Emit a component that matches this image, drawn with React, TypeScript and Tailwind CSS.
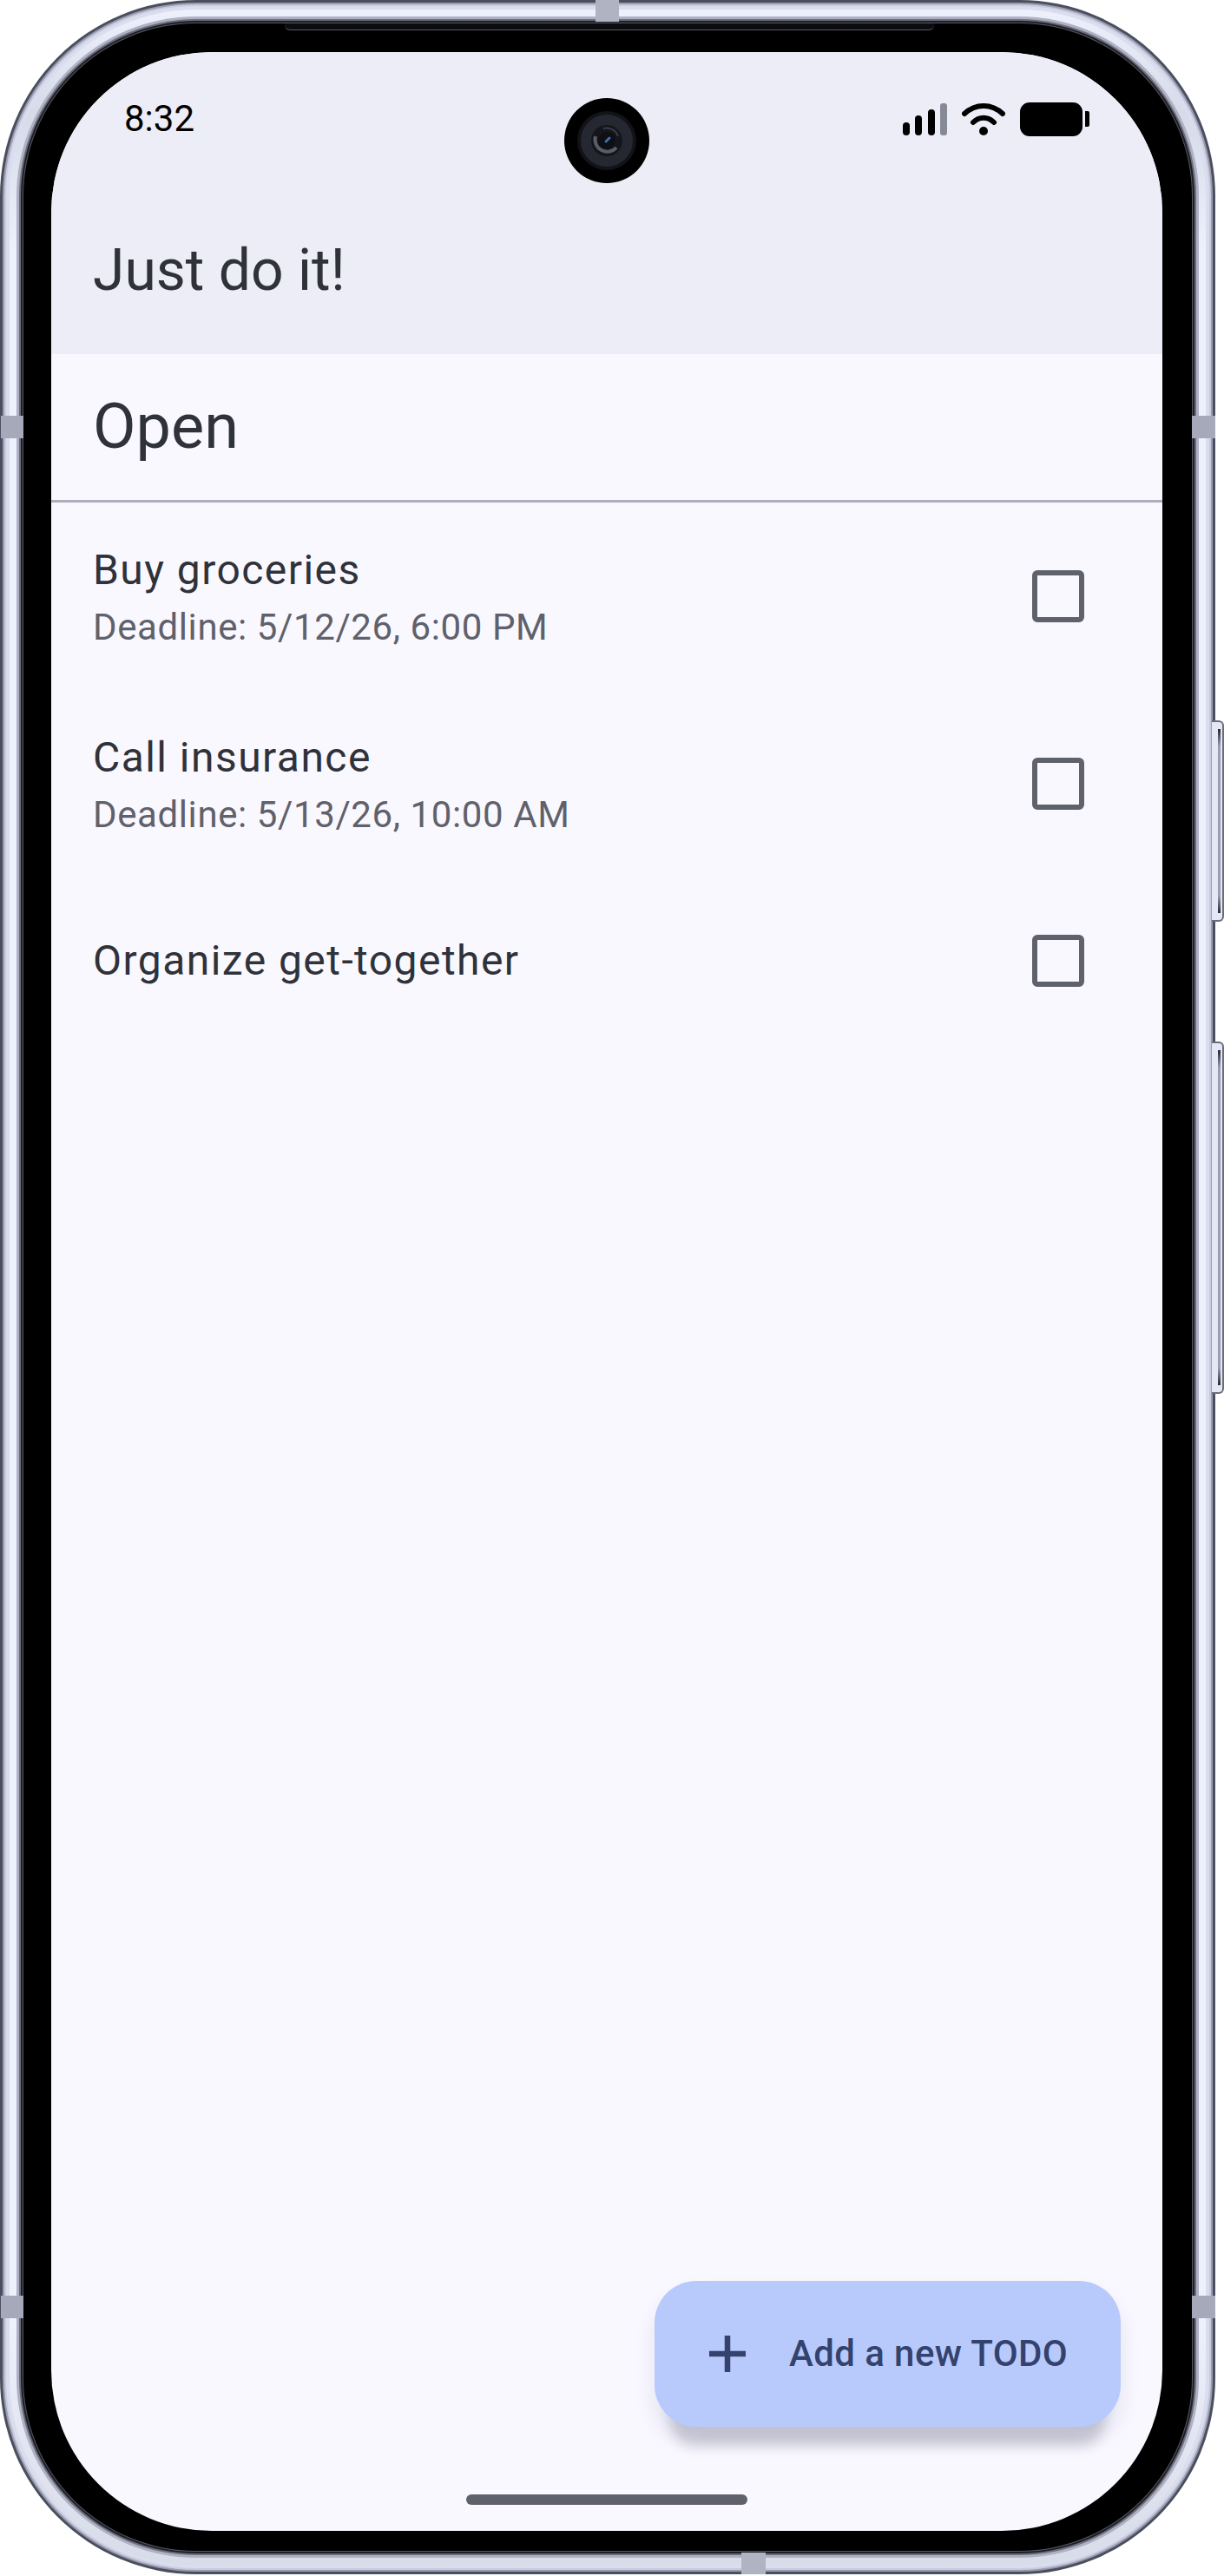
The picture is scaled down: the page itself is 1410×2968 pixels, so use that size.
const roboto = "font-['Roboto',sans-serif]";

const todos = [
  { title: 'Buy groceries', deadline: 'Deadline: 5/12/26, 6:00 PM' },
  { title: 'Call insurance', deadline: 'Deadline: 5/13/26, 10:00 AM' },
  { title: 'Organize get-together' },
];

function StatusIcons() {
  return (
    <div className="flex items-center justify-end h-[48px]">
      <svg width="52" height="38" viewBox="0 0 52 38" className="mr-[17px]">
        <rect x="1" y="23" width="8" height="15" rx="4" fill="#000" />
        <rect x="15" y="15" width="8" height="23" rx="4" fill="#000" />
        <rect x="30" y="8" width="8" height="30" rx="4" fill="#000" />
        <rect x="44" y="1" width="8" height="37" rx="3" fill="#868a96" />
      </svg>
      <svg width="50" height="38" viewBox="0 0 50 38" fill="none" className="mr-[17px]">
        <path d="M3 13C16 1 34 1 47 13" stroke="#000" strokeWidth="6" strokeLinecap="round" />
        <path d="M13 23C20 16 30 16 37 23" stroke="#000" strokeWidth="6" strokeLinecap="round" />
        <circle cx="25" cy="33" r="5" fill="#000" />
      </svg>
      <div className="w-[72px] h-[39px] rounded-[11px] bg-black" />
      <div className="ml-[3px] w-[5px] h-[18px] rounded-r-[2px] bg-black" />
    </div>
  );
}

function Camera() {
  return (
    <svg width="98" height="98" viewBox="0 0 98 98">
      <circle cx="49" cy="49" r="49" fill="#000" />
      <circle cx="49" cy="49" r="34" fill="#121318" />
      <circle cx="49" cy="49" r="30" fill="#262831" />
      <circle cx="49" cy="49" r="18" fill="#15161c" />
      <path d="M36 44A14 14 0 0 0 60 57" fill="none" stroke="#5a5d68" strokeWidth="4" />
      <path d="M45 35A14 14 0 0 1 62 44" fill="none" stroke="#3a3d48" strokeWidth="2" />
      <circle cx="49" cy="49" r="10" fill="#0e1015" />
      <path d="M48 50L52 46" stroke="#3f6fae" strokeWidth="3" strokeLinecap="round" />
    </svg>
  );
}

function TodoRow({ title, deadline }: { title: string; deadline?: string }) {
  return (
    <div className={`flex items-center justify-between pl-[48px] pr-[90px] ${deadline ? 'h-[216px]' : 'h-[192px]'}`}>
      <div>
        <div className="text-[48px] leading-[72px] tracking-[1.45px] text-[#30323a]">{title}</div>
        {deadline && <div className="text-[42px] leading-[60px] tracking-[0.6px] text-[#5f616b]">{deadline}</div>}
      </div>
      <div className="w-[60px] h-[60px] rounded-[6px] border-[6px] border-[#5f616b]" />
    </div>
  );
}

function Screen() {
  return (
    <div className={`${roboto} h-full rounded-[185px] overflow-hidden bg-[#faf8ff] flex flex-col`}>
      <div className="bg-[#ecedf6] h-[348px] pl-[48px] pt-[53px] flex flex-col shrink-0">
        <div className="grid grid-cols-[1fr_98px_1fr] ml-[36px] mr-[84px]">
          <span className="text-[42px] leading-[48px] text-black">8:32</span>
          <Camera />
          <StatusIcons />
        </div>
        <div className="mt-[59px] text-[66px] leading-[84px] text-[#30323a]">Just do it!</div>
      </div>
      <div className="h-[171px] pl-[48px] flex items-center border-b-[3px] border-[#adadbd] shrink-0">
        <span className="text-[72px] leading-[96px] text-[#30323a]">Open</span>
      </div>
      <div className="flex-1">
        {todos.map(todo => (
          <TodoRow key={todo.title} title={todo.title} deadline={todo.deadline} />
        ))}
      </div>
      <div className="flex justify-end pr-[48px] mb-[78px]">
        <button className="w-[537px] h-[168px] rounded-[48px] bg-[#b8c9fc] shadow-[0_40px_14px_-18px_rgba(50,50,70,0.2),0_16px_24px_2px_rgba(100,120,170,0.14)] flex items-center pl-[63px] text-[#34426e]">
          <svg width="42" height="42" viewBox="0 0 42 42" className="shrink-0">
            <path d="M21 0V42M0 21H42" stroke="currentColor" strokeWidth="6.5" fill="none" />
          </svg>
          <span className="ml-[50px] text-[42px] leading-[60px] font-medium tracking-[0.4px]">Add a new TODO</span>
        </button>
      </div>
      <div className="flex justify-center mb-[30px]">
        <div className="w-[324px] h-[12px] rounded-full bg-[#5f616b]" />
      </div>
    </div>
  );
}

function SideButton({ height }: { height: string }) {
  return (
    <div className={`${height} w-[14px] -ml-[4px] rounded-r-[6px] bg-[#e4e7f6] border-y-[2px] border-r-[2px] border-[#6a6d7c] flex items-stretch pl-[7px] py-[8px]`}>
      <div className="w-[3px] bg-[linear-gradient(to_bottom,#26272f,#9a9db0_20px,#9a9db0_calc(100%-20px),#26272f)]" />
    </div>
  );
}

export default function App() {
  return (
    <div className="relative w-[1410px] h-[2968px] bg-white flex items-start">
      {/* metal band, layered from the outside in */}
      <div className="w-[1400px] h-[2966px] shrink-0 rounded-[226px] bg-[#4b4e5e] p-[3px]">
        <div className="h-full rounded-[223px] bg-[#9a9db0] p-[2px]">
          <div className="h-full rounded-[221px] bg-[#c8ccdc] p-[2px]">
            <div className="h-full rounded-[219px] bg-[#dadded] p-[4px]">
              <div className="h-full rounded-[215px] bg-[linear-gradient(to_bottom,#eef0fc,#d6dae9_120px,#eef0fc_280px,#eef0fc_calc(100%-280px),#d8dbe8)] p-[8px]">
                <div className="h-full rounded-[207px] bg-[#aeb1c2] p-[3px]">
                  <div className="h-full rounded-[204px] bg-[#6a6d7c] p-[2px]">
                    <div className="h-full rounded-[202px] bg-[#1e1f26] p-[2px]">
                      <div className="h-full rounded-[200px] bg-[#55565f] p-[1px]">
                        <div className="h-full rounded-[199px] bg-black pl-[32px] pr-[34px] pt-[33px] pb-[23px]">
                          <Screen />
                        </div>
                      </div>
                    </div>
                  </div>
                </div>
              </div>
            </div>
          </div>
        </div>
      </div>
      {/* side buttons */}
      <div className="flex flex-col gap-[138px] pt-[830px]">
        <SideButton height="h-[232px]" />
        <SideButton height="h-[406px]" />
      </div>
      {/* antenna bands lie over the metal */}
      <div className="absolute left-[1px] top-[479px] flex flex-col gap-[2140px]">
        <div className="w-[26px] h-[26px] bg-[#a6a9b9]" />
        <div className="w-[26px] h-[26px] bg-[#a6a9b9]" />
      </div>
      <div className="absolute left-[1373px] top-[479px] flex flex-col gap-[2140px]">
        <div className="w-[27px] h-[26px] bg-[#a6a9b9]" />
        <div className="w-[27px] h-[26px] bg-[#a6a9b9]" />
      </div>
      <div className="absolute left-[686px] top-0 w-[27px] h-[25px] bg-[#b0b3c2]" />
      <div className="absolute left-[854px] top-[2941px] w-[28px] h-[25px] bg-[#b0b3c2]" />
      {/* speaker slit */}
      <div className="absolute left-[328px] top-[27px] w-[748px] h-[8px] bg-[#0c0c10] border-b border-[#55565f] rounded-b-[6px]" />
    </div>
  );
}
